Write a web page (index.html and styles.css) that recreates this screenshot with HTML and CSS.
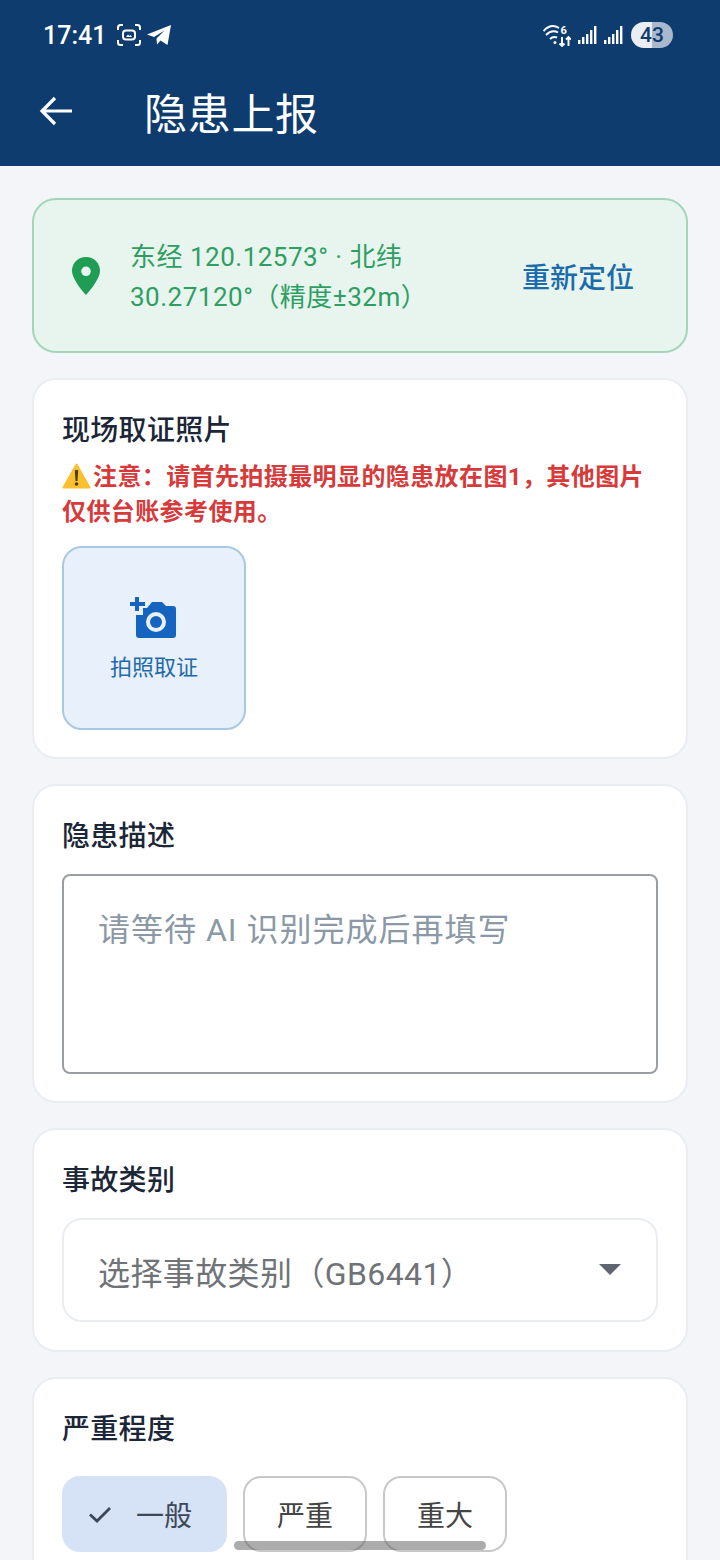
FILE: index.html
```html
<!DOCTYPE html>
<html lang="zh-CN">
<head>
  <meta charset="UTF-8" />
  <meta name="viewport" content="width=device-width, initial-scale=1.0"/>
  <title>隐患上报</title>
  <link rel="stylesheet" href="styles.css">
</head>
<body>

  <header class="app-header">
    <div class="status-bar">
      <div class="status-left">
        <span class="clock">17:41</span>
        <svg width="26" height="24" viewBox="0 0 26 24" fill="none" stroke="#fff" stroke-width="2">
          <path d="M2 7V4.500Q2 2 4.500 2H7M19 2H21.500Q24 2 24 4.500V7M24 17V19.500Q24 22 21.500 22H19M7 22H4.500Q2 22 2 19.500V17"/>
          <rect x="7" y="7.500" width="12" height="9" rx="3"/>
          <path d="M10 14l2-2.500 1.500 1.500 1-1 1.500 2z" fill="#fff" stroke="none"/>
        </svg>
        <svg width="26" height="24" viewBox="0 0 26 24">
          <path d="M1 11.500L25 2 21.500 22 14.500 17.500 11 21.500 10.500 15.500 18.500 7.500 8 14z" fill="#fff"/>
        </svg>
      </div>
      <div class="status-right">
        <svg width="28" height="26" viewBox="0 0 28 26" fill="none" stroke="#fff" stroke-width="1.900">
          <path d="M0.500 9Q8 1 16 6M3 13Q9 7 15 10.500M7 17Q10 14 14 15.500"/>
          <circle cx="12" cy="20.500" r="1.500" fill="#fff" stroke="none"/>
          <path d="M19 15V24M16.500 21.500L19 24 21.500 21.500M25.500 24V15M23 17.500L25.500 15 28 17.500"/>
          <text x="17.500" y="12" class="wifi-six">6</text>
        </svg>
        <svg width="20" height="20" viewBox="0 0 20 20" fill="#fff">
          <rect x="1" y="15" width="2.400" height="4"/><rect x="5" y="12" width="2.400" height="7"/><rect x="9" y="9" width="2.400" height="10"/><rect x="13" y="5" width="2.400" height="14"/><rect x="17" y="1" width="2.400" height="18"/>
        </svg>
        <svg width="20" height="20" viewBox="0 0 20 20" fill="#fff">
          <rect x="1" y="15" width="2.400" height="4"/><rect x="5" y="12" width="2.400" height="7"/><rect x="9" y="9" width="2.400" height="10"/><rect x="13" y="5" width="2.400" height="14"/><rect x="17" y="1" width="2.400" height="18"/>
        </svg>
        <span class="battery">43</span>
      </div>
    </div>
    <div class="title-bar">
      <svg class="back-icon" width="36" height="36" viewBox="0 0 36 36" fill="none" stroke="#fff" stroke-width="3.200">
        <path d="M34 18H4M17 5L4 18 17 31"/>
      </svg>
      <h1>隐患上报</h1>
    </div>
  </header>

  <main class="content">

    <div class="location-card">
      <svg class="pin-icon" width="30" height="40" viewBox="0 0 30 40">
        <path fill-rule="evenodd" fill="#1f9d55" d="M15 1C7 1 1 7 1 15c0 9 14 24 14 24s14-15 14-24C29 7 23 1 15 1zm0 9.500a4.800 4.800 0 1 1 0 9.600 4.800 4.800 0 0 1 0-9.600z"/>
      </svg>
      <div class="location-text">东经 120.12573° · 北纬<br>30.27120°（精度±32m）</div>
      <span class="relocate">重新定位</span>
    </div>

    <section class="card">
      <h3>现场取证照片</h3>
      <p class="warning"><span class="warn-emoji"><svg width="29" height="26" viewBox="0 0 29 26">
        <path d="M14.500 1.500L27.500 24.500H1.500z" fill="#fbc02d" stroke="#fbc02d" stroke-linejoin="round" stroke-width="2"/>
        <path d="M12.800 7h3.400l-.7 11h-2z" fill="#4a3b1a"/><circle cx="14.500" cy="21" r="1.800" fill="#4a3b1a"/>
      </svg></span>注意：请首先拍摄最明显的隐患放在图1，其他图片仅供台账参考使用。</p>
      <div class="photo-btn">
        <svg width="48" height="46" viewBox="0 0 48 46">
          <path fill="#1565c0" d="M6 19H13V12H17L22 6H32L36 10H43Q46 10 46 13V39Q46 42 43 42H9Q6 42 6 39Z"/>
          <circle cx="26" cy="26" r="10" fill="#e8f1fb"/>
          <circle cx="26" cy="26" r="6" fill="#1565c0"/>
          <path d="M5 1h4v5h6v4H9v5H5v-5H0V6h5z" fill="#1565c0"/>
        </svg>
        <span>拍照取证</span>
      </div>
    </section>

    <section class="card">
      <h3>隐患描述</h3>
      <div class="textarea">请等待 AI 识别完成后再填写</div>
    </section>

    <section class="card">
      <h3>事故类别</h3>
      <div class="select">
        <span>选择事故类别（GB6441）</span>
        <i class="caret"></i>
      </div>
    </section>

    <section class="card">
      <h3>严重程度</h3>
      <div class="chips">
        <div class="chip chip-on">
          <svg width="24" height="24" viewBox="0 0 24 24" fill="none" stroke="#3c4858" stroke-width="2.800">
            <path d="M2 12.500L9 19 22 6"/>
          </svg>
          <span>一般</span>
        </div>
        <div class="chip">严重</div>
        <div class="chip">重大</div>
      </div>
    </section>

  </main>

  <div class="home-bar"></div>

</body>
</html>
```
FILE: styles.css
```css
html, body {
  height: 1560px;
}
body {
  margin: 0;
  overflow: hidden;
  position: relative;
  font-family: Roboto, "Noto Sans CJK SC", sans-serif;
  background-color: #f3f5f9;
  color: #1b2636;
}
.app-header {
  background: #0f3c6e;
  color: #fff;
  height: 166px;
}
.status-bar {
  height: 70px;
  display: flex;
  align-items: center;
  justify-content: space-between;
  padding: 0 47px 0 43px;
}
.status-left, .status-right {
  display: flex;
  align-items: center;
}
.status-left {
  gap: 4px;
}
.status-right {
  gap: 6px;
}
.clock {
  font-size: 25px;
  font-weight: 500;
  margin-right: 6px;
}
.wifi-six {
  font: 700 11px Roboto, sans-serif;
  fill: #fff;
  stroke: none;
}
.battery {
  width: 42px;
  height: 26px;
  margin-left: 2px;
  border-radius: 13px;
  background: linear-gradient(to right, #e9eef5 50%, #a9b8cc 50%);
  color: #0f3c6e;
  font-size: 21px;
  font-weight: 500;
  line-height: 26px;
  text-align: center;
}
.title-bar {
  display: flex;
  align-items: center;
  height: 88px;
  padding: 0 0 7px 38px;
  box-sizing: border-box;
}
.back-icon {
  margin-right: 70px;
}
.title-bar h1 {
  margin: 0;
  font-size: 43px;
  font-weight: 400;
  letter-spacing: 0.7px;
}
.content {
  padding: 32px 32px 0;
  display: flex;
  flex-direction: column;
  gap: 25px;
}
.location-card {
  height: 155px;
  box-sizing: border-box;
  display: flex;
  align-items: center;
  background: #e8f5ee;
  border: 2px solid #a3d5b8;
  border-radius: 24px;
  padding: 0 52px 0 37px;
}
.pin-icon {
  margin-right: 29px;
}
.location-text {
  flex: 1;
  padding-top: 3px;
  color: #2e9e63;
  font-size: 26px;
  line-height: 40px;
  letter-spacing: 0.5px;
}
.relocate {
  color: #1c6bab;
  font-size: 28px;
  font-weight: 500;
}
.card {
  background: #fff;
  border: 2px solid #e9edf2;
  border-radius: 24px;
  padding: 29px 28px 27px;
}
.card h3 {
  margin: 0;
  font-size: 28px;
  font-weight: 500;
  line-height: 44px;
  letter-spacing: 0.3px;
}
.warning {
  margin: 7px 0 16px;
  color: #d63a3a;
  font-size: 24px;
  font-weight: 700;
  line-height: 35px;
  letter-spacing: 0.4px;
}
.warn-emoji svg {
  vertical-align: -4px;
  margin-right: 2px;
}
.photo-btn {
  width: 184px;
  height: 184px;
  box-sizing: border-box;
  display: flex;
  flex-direction: column;
  align-items: center;
  gap: 11px;
  padding-top: 48px;
  background: #e8f1fb;
  border: 2px solid #a9c8e2;
  border-radius: 20px;
  color: #1f6aa8;
  font-size: 22px;
  line-height: 30px;
}
.textarea {
  height: 200px;
  box-sizing: border-box;
  margin-top: 15px;
  border: 2px solid #999ea5;
  border-radius: 8px;
  padding: 32px 34px;
  color: #8b98a6;
  font-size: 32px;
  line-height: 44px;
  letter-spacing: 1px;
}
.select {
  height: 104px;
  box-sizing: border-box;
  margin: 15px 0 1px;
  display: flex;
  align-items: center;
  justify-content: space-between;
  border: 2px solid #e9edf2;
  border-radius: 20px;
  padding: 2px 35px 0 34px;
  color: #6f7377;
  font-size: 32px;
  letter-spacing: 0.4px;
}
.caret {
  width: 0;
  height: 0;
  margin-top: -3px;
  border-left: 11px solid transparent;
  border-right: 11px solid transparent;
  border-top: 11px solid #5f6670;
}
.chips {
  display: flex;
  gap: 16px;
  margin-top: 24px;
}
.chip {
  height: 76px;
  box-sizing: border-box;
  display: flex;
  align-items: center;
  justify-content: center;
  padding: 0 32px;
  border: 2px solid #c8c8c8;
  border-radius: 18px;
  color: #444;
  font-size: 28px;
}
.chip-on {
  width: 165px;
  gap: 24px;
  padding: 0 0 0 24px;
  justify-content: flex-start;
  background: #d6e2f6;
  border-color: #d6e2f6;
  color: #3c4858;
}
.home-bar {
  position: absolute;
  left: 234px;
  top: 1541px;
  width: 252px;
  height: 9px;
  border-radius: 5px;
  background: rgba(90, 90, 90, 0.5);
}
```
